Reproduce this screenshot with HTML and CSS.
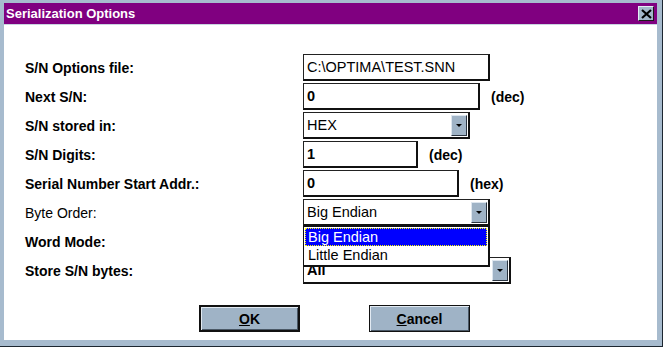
FILE: index.html
```html
<!DOCTYPE html>
<html lang="en">
<head>
  <meta charset="UTF-8">
  <title>Serialization Options</title>
  <link rel="stylesheet" href="styles.css">
</head>
<body>
  <div class="window">
    <div class="titlebar">
      <span class="title">Serialization Options</span>
      <span class="close">
        <svg width="11" height="10" viewBox="0 0 11 10"><path d="M1 1 L10 9 M10 1 L1 9" stroke="#000" stroke-width="2.2"/></svg>
      </span>
    </div>
    <div class="client">
      <div class="form">
        <label class="bold">S/N Options file:</label>
        <div class="field"><div class="edit w-file">C:\OPTIMA\TEST.SNN</div></div>

        <label class="bold">Next S/N:</label>
        <div class="field"><div class="edit w-next num">0</div><span class="unit">(dec)</span></div>

        <label class="bold">S/N stored in:</label>
        <div class="field"><div class="combo w-stored"><span class="value">HEX</span><span class="arrow"></span></div></div>

        <label class="bold">S/N Digits:</label>
        <div class="field"><div class="edit w-digits num">1</div><span class="unit">(dec)</span></div>

        <label class="bold">Serial Number Start Addr.:</label>
        <div class="field"><div class="edit w-addr num">0</div><span class="unit">(hex)</span></div>

        <label>Byte Order:</label>
        <div class="field dropdown-host">
          <div class="combo w-file"><span class="value">Big Endian</span><span class="arrow"></span></div>
          <ul class="listbox">
            <li class="selected">Big Endian</li>
            <li>Little Endian</li>
          </ul>
        </div>

        <label class="bold">Word Mode:</label>
        <div class="field"><div class="combo w-file"><span class="value"></span><span class="arrow"></span></div></div>

        <label class="bold">Store S/N bytes:</label>
        <div class="field"><div class="combo w-store"><span class="value num">All</span><span class="arrow"></span></div></div>
      </div>
      <div class="actions">
        <button class="btn default"><u>O</u>K</button>
        <button class="btn"><u>C</u>ancel</button>
      </div>
    </div>
  </div>
</body>
</html>
```

FILE: styles.css
```css
body {
  margin: 0;
  font-family: 'Liberation Sans', Arial, sans-serif;
  background: #fff;
}
.window {
  box-sizing: border-box;
  width: 663px;
  height: 347px;
  background: #a7bbce;
  padding: 3px 5px 6px 4px;
  border-right: 1px solid #1c2630;
  border-bottom: 1px solid #1c2630;
  display: flex;
  flex-direction: column;
}
.titlebar {
  height: 21px;
  background: #800080;
  display: flex;
  align-items: center;
  justify-content: space-between;
  padding: 0 3px 0 2px;
  border-bottom: 1px solid #c8d4e0;
}
.title {
  color: #fff;
  font-weight: bold;
  font-size: 13px;
}
.close {
  box-sizing: border-box;
  width: 16px;
  height: 15px;
  background: #a3b7ca;
  border: 1px solid;
  border-color: #e4ecf4 #1a1a1a #1a1a1a #e4ecf4;
  display: flex;
  align-items: center;
  justify-content: center;
}
.client {
  flex: 1;
  background: #fff;
}
.form {
  display: grid;
  grid-template-columns: 278px auto;
  grid-auto-rows: 27px;
  row-gap: 2px;
  padding: 29px 0 0 21px;
  font-size: 14px;
}
label {
  display: flex;
  align-items: center;
  color: #000;
}
.bold {
  font-weight: bold;
}
.field {
  display: flex;
  align-items: center;
  gap: 11px;
}
.edit, .combo {
  box-sizing: border-box;
  height: 27px;
  border: 1px solid #222;
  border-right: 2px solid #111;
  border-bottom: 2px solid #111;
  background: #fff;
  display: flex;
  align-items: center;
  padding-left: 3px;
  font-size: 14.5px;
}
.num {
  font-weight: bold;
}
.unit {
  font-weight: bold;
}
.w-file { width: 187px; }
.w-next { width: 177px; }
.w-stored { width: 167px; }
.w-digits { width: 115px; }
.w-addr { width: 156px; }
.w-store { width: 208px; }
.combo .value {
  flex: 1;
}
.arrow {
  box-sizing: border-box;
  width: 16px;
  height: 21px;
  margin-right: 1px;
  background: #9fb3c6;
  border: 1px solid;
  border-color: #dde6ef #2a3440 #2a3440 #dde6ef;
  position: relative;
}
.arrow::after {
  content: "";
  position: absolute;
  left: 4px;
  top: 8px;
  border-left: 3px solid transparent;
  border-right: 3px solid transparent;
  border-top: 3px solid #000;
}
.dropdown-host {
  position: relative;
}
.listbox {
  position: absolute;
  left: 0;
  top: 27px;
  z-index: 2;
  box-sizing: border-box;
  width: 187px;
  margin: 0;
  padding: 1px;
  list-style: none;
  background: #fff;
  border: 1px solid #111;
  border-right-width: 2px;
  border-bottom-width: 2px;
  font-size: 14.5px;
}
.listbox li {
  height: 18px;
  line-height: 18px;
  padding-left: 3px;
}
.listbox li.selected {
  background: #0000ff;
  color: #fff;
  outline: 1px dotted #ffff00;
  outline-offset: -1px;
}
.actions {
  display: flex;
  gap: 69px;
  padding: 21px 0 0 195px;
}
.btn {
  box-sizing: border-box;
  width: 101px;
  height: 27px;
  background: #9fb3c6;
  font-family: 'Liberation Sans', Arial, sans-serif;
  font-size: 14px;
  font-weight: bold;
  color: #000;
  border: 1px solid #111;
  box-shadow: inset 1px 1px 0 #e2eaf2, inset -1px -1px 0 #4a5866;
  padding: 0;
}
.btn.default {
  border-width: 2px;
}
```
